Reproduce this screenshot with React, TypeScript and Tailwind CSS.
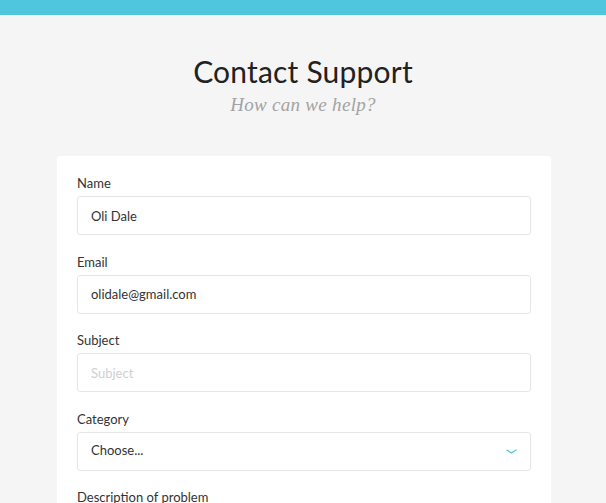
import React from 'react';

const fields = [
  { label: 'Name', value: 'Oli Dale' },
  { label: 'Email', value: 'olidale@gmail.com' },
  { label: 'Subject', value: '', placeholder: 'Subject' },
];

export default function App() {
  return (
    <div className="min-h-screen bg-[#f5f5f5] font-['Lato','Open_Sans',sans-serif] text-[#222]">
      {/* top bar */}
      <div className="h-[15px] bg-[#4fc6dd]" />

      {/* heading */}
      <div className="pt-[36px] text-center">
        <h1 className="text-[30px] leading-[40px] text-[#222] tracking-[0.2px]">Contact Support</h1>
        <p className="mt-[2px] text-[19px] leading-[24px] italic text-[#a3a3a3] font-['Liberation_Serif',serif] tracking-[0.3px]">
          How can we help?
        </p>
      </div>

      {/* form card */}
      <div className="mx-auto mt-[39px] w-[494px] translate-x-[1px] rounded-[3px] bg-white px-5 pt-[17px] pb-6">
        <div className="flex flex-col gap-[16.5px]">
          {fields.map((f) => (
            <div key={f.label} className="flex flex-col gap-[3px]">
              <label className="text-[13px] leading-[20px] text-[#333]">{f.label}</label>
              <input
                className="h-[39px] w-full rounded-[3px] border border-[#e6e6e6] bg-white px-[13px] text-[13px] text-[#333] outline-none placeholder:text-[#d0d0d0]"
                defaultValue={f.value}
                placeholder={f.placeholder}
              />
            </div>
          ))}

          <div className="flex flex-col gap-[3px]">
            <label className="text-[13px] leading-[20px] text-[#333]">Category</label>
            <div className="flex h-[39px] items-center justify-between rounded-[3px] border border-[#e6e6e6] bg-white pl-[13px] pr-[13px] text-[13px] text-[#333]">
              <span>Choose...</span>
              <svg width="11" height="5" viewBox="0 0 11 5" fill="none">
                <path d="M0.5 0.7 L5.5 4 L10.5 0.7" stroke="#4fc6dd" strokeWidth="1.3" />
              </svg>
            </div>
          </div>

          <div className="flex flex-col gap-[3px]">
            <label className="text-[13px] leading-[20px] text-[#333]">Description of problem</label>
            <textarea className="h-[120px] w-full rounded-[3px] border border-[#e6e6e6] bg-white px-[13px] py-[10px] text-[13px] outline-none" />
          </div>
        </div>
      </div>
    </div>
  );
}
